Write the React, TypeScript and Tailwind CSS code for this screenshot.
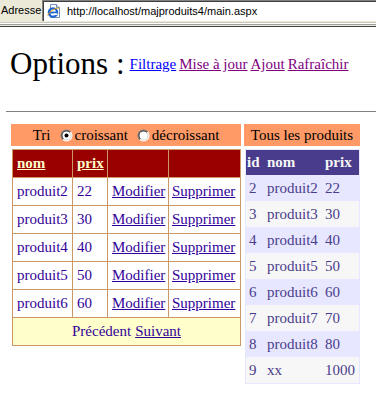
const Radio = ({ checked }: { checked?: boolean }) => (
  <svg width="13" height="13" viewBox="0 0 13 13" className="shrink-0">
    <defs>
      <linearGradient id="radioOuter" x1="0" y1="0" x2="1" y2="1">
        <stop offset="0.5" stopColor="#808080" />
        <stop offset="0.5" stopColor="#ffffff" />
      </linearGradient>
      <linearGradient id="radioInner" x1="0" y1="0" x2="1" y2="1">
        <stop offset="0.5" stopColor="#404040" />
        <stop offset="0.5" stopColor="#d4d0c8" />
      </linearGradient>
    </defs>
    <circle cx="6.5" cy="6.5" r="6" fill="url(#radioOuter)" />
    <circle cx="6.5" cy="6.5" r="5" fill="url(#radioInner)" />
    <circle cx="6.5" cy="6.5" r="4" fill="#ffffff" />
    {checked && <circle cx="6.5" cy="6.5" r="2" fill="#000000" />}
  </svg>
);

const PageIcon = () => (
  <svg width="16" height="16" viewBox="0 0 16 16" className="shrink-0">
    <path d="M4.5 1.5h6l3 3v10h-9z" fill="#ffffff" stroke="#6f8fb8" />
    <path d="M10.5 1.5v3h3" fill="#dde6f2" stroke="#6f8fb8" />
    <circle cx="7" cy="9.5" r="4.2" fill="none" stroke="#1d64d2" strokeWidth="2.2" />
    <path d="M3.5 9.5h7" stroke="#1d64d2" strokeWidth="1.8" />
    <path d="M8 11.2h3.5" stroke="#ffffff" strokeWidth="1.6" />
    <path d="M1.5 12.5c2-4 8-8 12-7.5" fill="none" stroke="#e8a317" strokeWidth="1" />
  </svg>
);

const AddressBar = () => (
  <div className="h-[27px] bg-[#ece9d8] flex flex-col font-['Liberation_Sans',Arial,sans-serif] text-[11px] text-black">
    <div className="h-[21px] flex">
      <div className="w-[42px] flex items-center pl-px">Adresse</div>
      <div className="flex-1 flex items-center gap-[5px] bg-white border-t border-l border-[#808080] shadow-[inset_1px_1px_0_#404040] pl-[3px]">
        <PageIcon />
        <span>http://localhost/majproduits4/main.aspx</span>
      </div>
    </div>
    <div className="h-px bg-[#ece9d8]" />
    <div className="h-px bg-[#cbc7b8]" />
    <div className="h-px bg-[#ffffff]" />
    <div className="h-px bg-[#9d9d9d]" />
    <div className="h-px bg-[#ece9d8]" />
    <div className="h-px bg-[#404040]" />
  </div>
);

const pages = [
  { nom: "produit2", prix: 22 },
  { nom: "produit3", prix: 30 },
  { nom: "produit4", prix: 40 },
  { nom: "produit5", prix: 50 },
  { nom: "produit6", prix: 60 },
];

const tous = [
  { id: 2, nom: "produit2", prix: 22 },
  { id: 3, nom: "produit3", prix: 30 },
  { id: 4, nom: "produit4", prix: 40 },
  { id: 5, nom: "produit5", prix: 50 },
  { id: 6, nom: "produit6", prix: 60 },
  { id: 7, nom: "produit7", prix: 70 },
  { id: 8, nom: "produit8", prix: 80 },
  { id: 9, nom: "xx", prix: 1000 },
];

export default function App() {
  return (
    <div className="w-[376px] h-[397px] overflow-hidden bg-white font-['Liberation_Serif','Times_New_Roman',serif]">
      <AddressBar />

      <div className="mt-[19px] ml-[10px] flex items-center gap-[5px]">
        <h1 className="text-[31px] leading-[36px] font-normal text-black whitespace-nowrap">
          Options :
        </h1>
        <div className="flex gap-[3px] text-[15px] leading-[18px] whitespace-nowrap">
          <a href="#" className="underline text-[#0000ff]">Filtrage</a>
          <a href="#" className="underline text-[#800080]">Mise à jour</a>
          <a href="#" className="underline text-[#800080]">Ajout</a>
          <a href="#" className="underline text-[#800080]">Rafraîchir</a>
        </div>
      </div>

      <hr className="mt-[29px] ml-[6px] border-[#808080]" />

      <div className="mt-[12px] ml-[11px] flex items-start gap-[3px] text-[15px]">
        <div className="w-[230px]">
          <div className="h-[22px] bg-[#ff9966] flex items-center justify-center text-black leading-[22px]">
            <span>Tri</span>
            <span className="ml-[9px]"><Radio checked /></span>
            <span className="ml-[2px]">croissant</span>
            <span className="ml-[9px]"><Radio /></span>
            <span className="ml-[2px]">décroissant</span>
          </div>

          <div className="mt-[3px] ml-px w-[229px] grid grid-cols-[59px_34px_60px_71px] gap-px p-px bg-[#cc9966] text-[#330099]">
            <div className="h-[27px] bg-[#990000] flex items-center pl-[4px] font-bold text-[#ffffcc] underline">nom</div>
            <div className="h-[27px] bg-[#990000] flex items-center pl-[4px] font-bold text-[#ffffcc] underline">prix</div>
            <div className="h-[27px] bg-[#990000]" />
            <div className="h-[27px] bg-[#990000]" />
            {pages.map((p) => (
              <div key={p.nom} className="contents">
                <div className="h-[27px] bg-white flex items-center pl-[4px]">{p.nom}</div>
                <div className="h-[27px] bg-white flex items-center pl-[4px]">{p.prix}</div>
                <div className="h-[27px] bg-white flex items-center pl-[4px]">
                  <a href="#" className="underline">Modifier</a>
                </div>
                <div className="h-[27px] bg-white flex items-center pl-[3px]">
                  <a href="#" className="underline">Supprimer</a>
                </div>
              </div>
            ))}
            <div className="col-span-4 h-[27px] bg-[#ffffcc] flex items-center justify-center gap-[4px]">
              <span>Précédent</span>
              <a href="#" className="underline">Suivant</a>
            </div>
          </div>
        </div>

        <div className="w-[116px]">
          <div className="h-[22px] bg-[#ff9966] flex items-center justify-center text-black leading-[22px]">
            Tous les produits
          </div>
          <div className="mt-[3px] ml-px w-[115px] border border-[#e7e7ff] grid grid-cols-[18px_58px_37px] text-[#4a3c8c]">
            <div className="h-[25px] bg-[#4a3c8c] text-[#f7f7f7] font-bold flex items-center pl-px">id</div>
            <div className="h-[25px] bg-[#4a3c8c] text-[#f7f7f7] font-bold flex items-center pl-[3px]">nom</div>
            <div className="h-[25px] bg-[#4a3c8c] text-[#f7f7f7] font-bold flex items-center pl-[3px]">prix</div>
            {tous.map((p, i) => {
              const bg = i % 2 === 0 ? "bg-[#e7e7ff]" : "bg-[#f7f7f7]";
              return (
                <div key={p.id} className="contents">
                  <div className={`h-[26px] ${bg} flex items-center pl-[3px]`}>{p.id}</div>
                  <div className={`h-[26px] ${bg} flex items-center pl-[3px]`}>{p.nom}</div>
                  <div className={`h-[26px] ${bg} flex items-center pl-[3px]`}>{p.prix}</div>
                </div>
              );
            })}
          </div>
        </div>
      </div>
    </div>
  );
}
